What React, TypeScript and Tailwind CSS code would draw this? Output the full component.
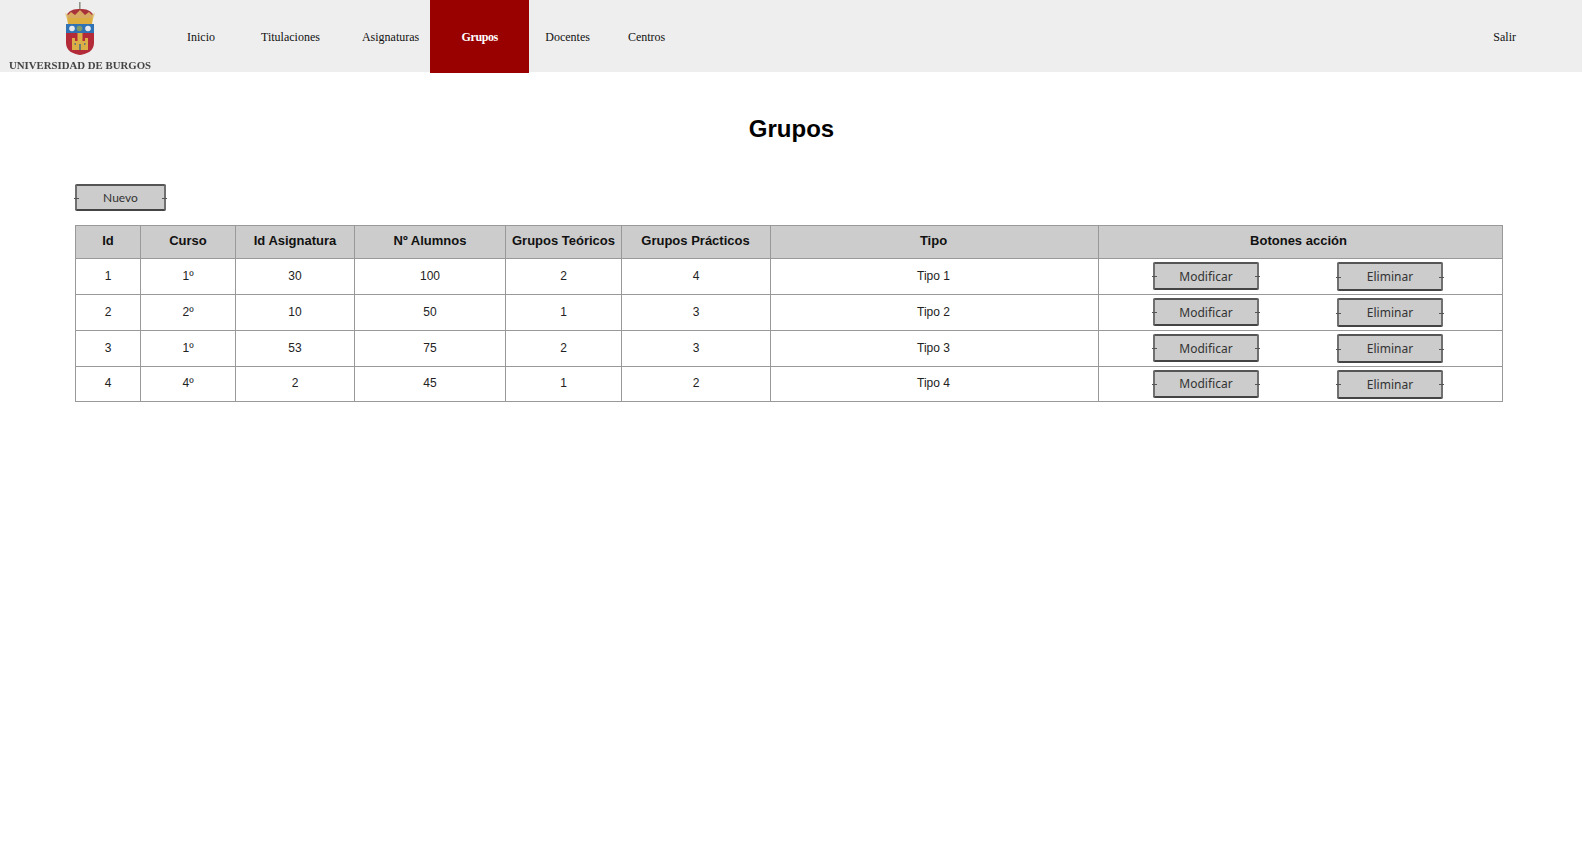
import type { ReactNode } from 'react'

// Menu entries with the gap each one keeps to the previous item
const navItems = [
  { label: 'Inicio', className: 'ml-[27px]' },
  { label: 'Titulaciones', className: 'ml-[46px]' },
  { label: 'Asignaturas', className: 'ml-[42px]' },
  { label: 'Grupos', className: 'ml-[11px] h-[73px] w-[99px] justify-center bg-[#990000] text-white font-bold tracking-[-0.4px]' },
  { label: 'Docentes', className: 'ml-[16px]' },
  { label: 'Centros', className: 'ml-[38px]' },
]

const groups = [
  { id: 1, curso: '1º', asignatura: 30, alumnos: 100, teoricos: 2, practicos: 4, tipo: 'Tipo 1' },
  { id: 2, curso: '2º', asignatura: 10, alumnos: 50, teoricos: 1, practicos: 3, tipo: 'Tipo 2' },
  { id: 3, curso: '1º', asignatura: 53, alumnos: 75, teoricos: 2, practicos: 3, tipo: 'Tipo 3' },
  { id: 4, curso: '4º', asignatura: 2, alumnos: 45, teoricos: 1, practicos: 2, tipo: 'Tipo 4' },
]

const columns = [
  { title: 'Id', className: 'w-[65px]' },
  { title: 'Curso', className: 'w-[95px]' },
  { title: 'Id Asignatura', className: 'w-[119px]' },
  { title: 'Nº Alumnos', className: 'w-[151px]' },
  { title: 'Grupos Teóricos', className: 'w-[116px]' },
  { title: 'Grupos Prácticos', className: 'w-[149px] pr-[1px]' },
  { title: 'Tipo', className: 'w-[328px] pr-[2px]' },
  { title: 'Botones acción', className: 'w-[404px] pr-[4px]' },
]

function Logo() {
  return (
    <div className="w-[160px] h-[72px] shrink-0 flex flex-col items-center overflow-hidden">
      <svg viewBox="0 0 32 56" className="w-[32px] h-[56px] mt-[2px] blur-[0.5px]">
        {/* crown */}
        <path d="M15 0h1.6v7H15z" fill="#8f9488" />
        <path d="M3 13c2-5 7-6 13-6s11 1 13 6l-1 4H4z" fill="#a8323a" />
        <path d="M1 11l3 2 3-3 4 3 5-5 5 5 4-3 3 3 3-2-2 6H3z" fill="#e0c068" opacity="0.85" />
        <path d="M3 16h26l-1 6H4z" fill="#dcae3f" />
        {/* blue band */}
        <path d="M2 22h28v9H2z" fill="#2f73b5" />
        <circle cx="8" cy="26.5" r="2.8" fill="#e4e9f0" />
        <circle cx="15.5" cy="26.5" r="2.8" fill="#7f9a6b" />
        <circle cx="24" cy="26.5" r="2.8" fill="#e4e9f0" />
        {/* shield and castle */}
        <path d="M2 31h28v10c0 8-7 11-14 12C9 52 2 49 2 41z" fill="#b32b38" />
        <path d="M8 36h3v3h2.500v-8h5v8H21v-3h3v12H8z" fill="#dcae46" />
        <path d="M15 42h2v6h-2zM10.500 41h1.500v2h-1.500zM20 41h1.500v2H20z" fill="#6a7a78" />
      </svg>
      <span className="mt-[1px] whitespace-nowrap font-['Liberation_Serif',serif] font-bold text-[10.8px] leading-[12px] text-[#444] blur-[0.3px]">
        UNIVERSIDAD DE BURGOS
      </span>
    </div>
  )
}

// Wireframe style button with the hand drawn dark edge and its little side ticks
function SketchButton({ children, className }: { children: ReactNode; className: string }) {
  return (
    <button className={`relative flex items-center justify-center bg-[#cccccc] border-2 border-x-[#707070] border-t-[#555] border-b-[#444] rounded-[2px] text-[#333] ${className}`}>
      <span className="absolute left-[-3px] top-1/2 w-[5px] h-px bg-[#555]" />
      <span className="absolute right-[-3px] top-1/2 w-[5px] h-px bg-[#555]" />
      <span className="pt-[1px]">{children}</span>
    </button>
  )
}

export default function App() {
  const cell = 'border border-[#999] text-center align-middle p-0'

  return (
    <div className="min-h-[858px] bg-white font-['Liberation_Sans',sans-serif] text-black">
      {/* Top menu */}
      <nav className="flex items-start h-[72px] bg-[#eeeeee] font-['Liberation_Serif',serif] text-[12px] text-[#111]">
        <Logo />
        {navItems.map((item) => (
          <a key={item.label} className={`flex items-center h-[73px] ${item.className}`}>
            {item.label}
          </a>
        ))}
        <a className="flex items-center h-[73px] ml-auto mr-[66px]">Salir</a>
      </nav>

      <main className="pl-[75px]">
        <h1 className="mt-[43px] text-center text-[24px] leading-[28px] font-bold pr-[74px]">Grupos</h1>

        <SketchButton className="mt-[41px] w-[91px] h-[27px] text-[12px] font-['Lato',sans-serif]">Nuevo</SketchButton>

        <table className="mt-[14px] w-[1428px] table-fixed border-collapse text-[12px]">
          <thead>
            <tr className="h-[33px] bg-[#cccccc]">
              {columns.map((col) => (
                <th key={col.title} className={`${cell} ${col.className} pb-[2px] text-[13px] font-bold text-[#111]`}>
                  {col.title}
                </th>
              ))}
            </tr>
          </thead>
          <tbody>
            {groups.map((g) => (
              <tr key={g.id} className="h-[36px] last:h-[35px] text-[#222]">
                <td className={`${cell} pb-[2px]`}>{g.id}</td>
                <td className={`${cell} pb-[2px]`}>{g.curso}</td>
                <td className={`${cell} pb-[2px]`}>{g.asignatura}</td>
                <td className={`${cell} pb-[2px]`}>{g.alumnos}</td>
                <td className={`${cell} pb-[2px]`}>{g.teoricos}</td>
                <td className={`${cell} pb-[2px]`}>{g.practicos}</td>
                <td className={`${cell} pb-[2px] pr-[2px]`}>{g.tipo}</td>
                <td className={cell}>
                  <div className="flex pl-[54px] gap-[78px] text-[12px] font-['Noto_Sans',sans-serif]">
                    <SketchButton className="w-[106px] h-[28px]">Modificar</SketchButton>
                    <SketchButton className="w-[106px] h-[29px]">Eliminar</SketchButton>
                  </div>
                </td>
              </tr>
            ))}
          </tbody>
        </table>
      </main>
    </div>
  )
}
